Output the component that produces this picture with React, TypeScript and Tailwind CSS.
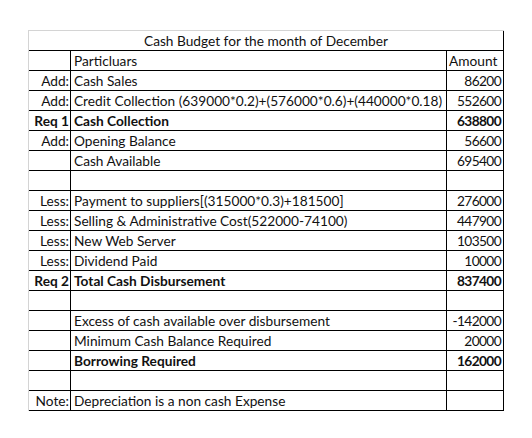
import React from 'react';

type Row = {
  label?: string;
  text?: string;
  amount?: string;
  bold?: boolean;
  header?: boolean;
};

const rows: Row[] = [
  { text: 'Particluars', amount: 'Amount', header: true },
  { label: 'Add:', text: 'Cash Sales', amount: '86200' },
  { label: 'Add:', text: 'Credit Collection (639000*0.2)+(576000*0.6)+(440000*0.18)', amount: '552600' },
  { label: 'Req 1', text: 'Cash Collection', amount: '638800', bold: true },
  { label: 'Add:', text: 'Opening Balance', amount: '56600' },
  { text: 'Cash Available', amount: '695400' },
  {},
  { label: 'Less:', text: 'Payment to suppliers[(315000*0.3)+181500]', amount: '276000' },
  { label: 'Less:', text: 'Selling & Administrative Cost(522000-74100)', amount: '447900' },
  { label: 'Less:', text: 'New Web Server', amount: '103500' },
  { label: 'Less:', text: 'Dividend Paid', amount: '10000' },
  { label: 'Req 2', text: 'Total Cash Disbursement', amount: '837400', bold: true },
  {},
  { text: 'Excess of cash available over disbursement', amount: '-142000' },
  { text: 'Minimum Cash Balance Required', amount: '20000' },
  { text: 'Borrowing Required', amount: '162000', bold: true },
  {},
  { label: 'Note:', text: 'Depreciation is a non cash Expense' },
];

const cell = 'h-5 border-r border-b border-black flex items-end pb-[2px] leading-none whitespace-nowrap overflow-hidden';

export default function App() {
  return (
    <div className="w-[532px] h-[438px] bg-white pt-[30px] pl-[28px] text-[#111] text-[13.7px]" style={{ fontFamily: 'Lato, "Liberation Sans", sans-serif' }}>
      <div className="w-[476px] border-l border-t border-[#d4d4d4]">
        <div className={`${cell} justify-center`}>Cash Budget for the month of December</div>
        {rows.map((r, i) => (
          <div key={i} className={`grid grid-cols-[42px_376px_57px] ${r.bold ? 'font-bold' : ''}`}>
            <div className={`${cell} justify-end pr-[1px]`}>{r.label}</div>
            <div className={`${cell} pl-[3px]`}>{r.text}</div>
            <div className={`${cell} ${r.header ? 'pl-[2px]' : 'justify-end pr-[2px] tracking-[-0.6px]'}`}>{r.amount}</div>
          </div>
        ))}
      </div>
    </div>
  );
}
